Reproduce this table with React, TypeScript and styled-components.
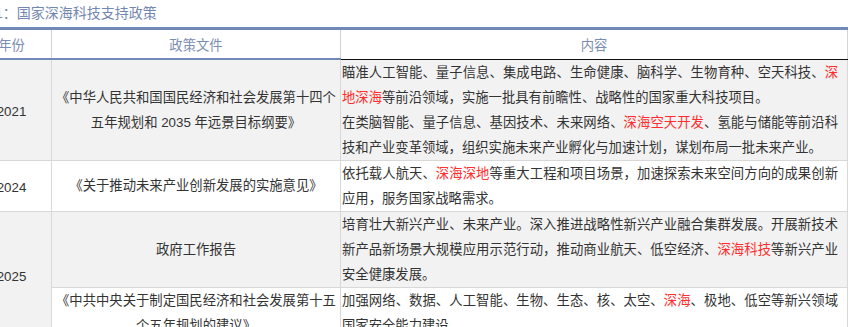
import React from 'react';
import styled, { createGlobalStyle } from 'styled-components';

const GlobalStyle = createGlobalStyle`
  html, body {
    margin: 0;
    padding: 0;
    background: #fff;
    overflow: hidden;
  }
`;

const FONT = `"Liberation Sans", "Noto Sans CJK SC", sans-serif`;

const Page = styled.div`
  margin-left: -29px;
  width: 875px;
  font-family: ${FONT};
`;

const Caption = styled.div`
  padding-left: 10px;
  font-size: 14px;
  line-height: 27px;
  color: #7487b0;
`;

const Table = styled.table`
  width: 873px;
  table-layout: fixed;
  border-collapse: collapse;
  border-top: 3px solid #7189b9;
  font-size: 13.33px;
`;

const Head = styled.th<{ $w: number; $dark?: boolean }>`
  width: ${(p) => p.$w}px;
  padding: 4px 0 0;
  line-height: 24px;
  font-weight: normal;
  color: #7c8db2;
  text-align: center;
  border-left: 1px solid #d4d4d4;
  border-right: 1px solid #d4d4d4;
  border-bottom: ${(p) => (p.$dark ? '1px solid #111' : '2px solid #7189b9')};
`;

const Cell = styled.td<{ $shade?: boolean }>`
  padding: 0;
  line-height: 25px;
  color: #333;
  text-align: center;
  vertical-align: middle;
  background: ${(p) => (p.$shade ? '#f2f2f2' : '#fff')};
  border: 1px solid #d8d8d8;
`;

const YearCell = styled(Cell)`
  padding-top: 3px;
`;

const TextCell = styled(Cell)`
  padding: 0 9px 0 1px;
  text-align: justify;
`;

const Hot = styled.span`
  color: #ff2d2d;
`;

const FullLine = styled.span`
  display: block;
  text-align: justify;
  text-align-last: justify;
`;

export default function App() {
  return (
    <Page>
      <GlobalStyle />
      <Caption>表1：国家深海科技支持政策</Caption>
      <Table>
        <thead>
          <tr>
            <Head $w={79}>年份</Head>
            <Head $w={288}>政策文件</Head>
            <Head $w={506} $dark>内容</Head>
          </tr>
        </thead>
        <tbody>
          <tr>
            <YearCell $shade>2021</YearCell>
            <Cell $shade>《中华人民共和国国民经济和社会发展第十四个五年规划和 2035 年远景目标纲要》</Cell>
            <TextCell $shade>
              瞄准人工智能、量子信息、集成电路、生命健康、脑科学、生物育种、空天科技、<Hot>深地深海</Hot>等前沿领域，实施一批具有前瞻性、战略性的国家重大科技项目。
              <br />
              在类脑智能、量子信息、基因技术、未来网络、<Hot>深海空天开发</Hot>、氢能与储能等前沿科技和产业变革领域，组织实施未来产业孵化与加速计划，谋划布局一批未来产业。
            </TextCell>
          </tr>
          <tr>
            <YearCell>2024</YearCell>
            <Cell>《关于推动未来产业创新发展的实施意见》</Cell>
            <TextCell>
              <FullLine>
                依托载人航天、<Hot>深海深地</Hot>等重大工程和项目场景，加速探索未来空间方向的成果创新
              </FullLine>
              应用，服务国家战略需求。
            </TextCell>
          </tr>
          <tr>
            <YearCell $shade rowSpan={2}>2025</YearCell>
            <Cell $shade>政府工作报告</Cell>
            <TextCell $shade>
              培育壮大新兴产业、未来产业。深入推进战略性新兴产业融合集群发展。开展新技术新产品新场景大规模应用示范行动，推动商业航天、低空经济、<Hot>深海科技</Hot>等新兴产业安全健康发展。
            </TextCell>
          </tr>
          <tr>
            <Cell>《中共中央关于制定国民经济和社会发展第十五个五年规划的建议》</Cell>
            <TextCell>
              加强网络、数据、人工智能、生物、生态、核、太空、<Hot>深海</Hot>、极地、低空等新兴领域国家安全能力建设。
            </TextCell>
          </tr>
        </tbody>
      </Table>
    </Page>
  );
}
